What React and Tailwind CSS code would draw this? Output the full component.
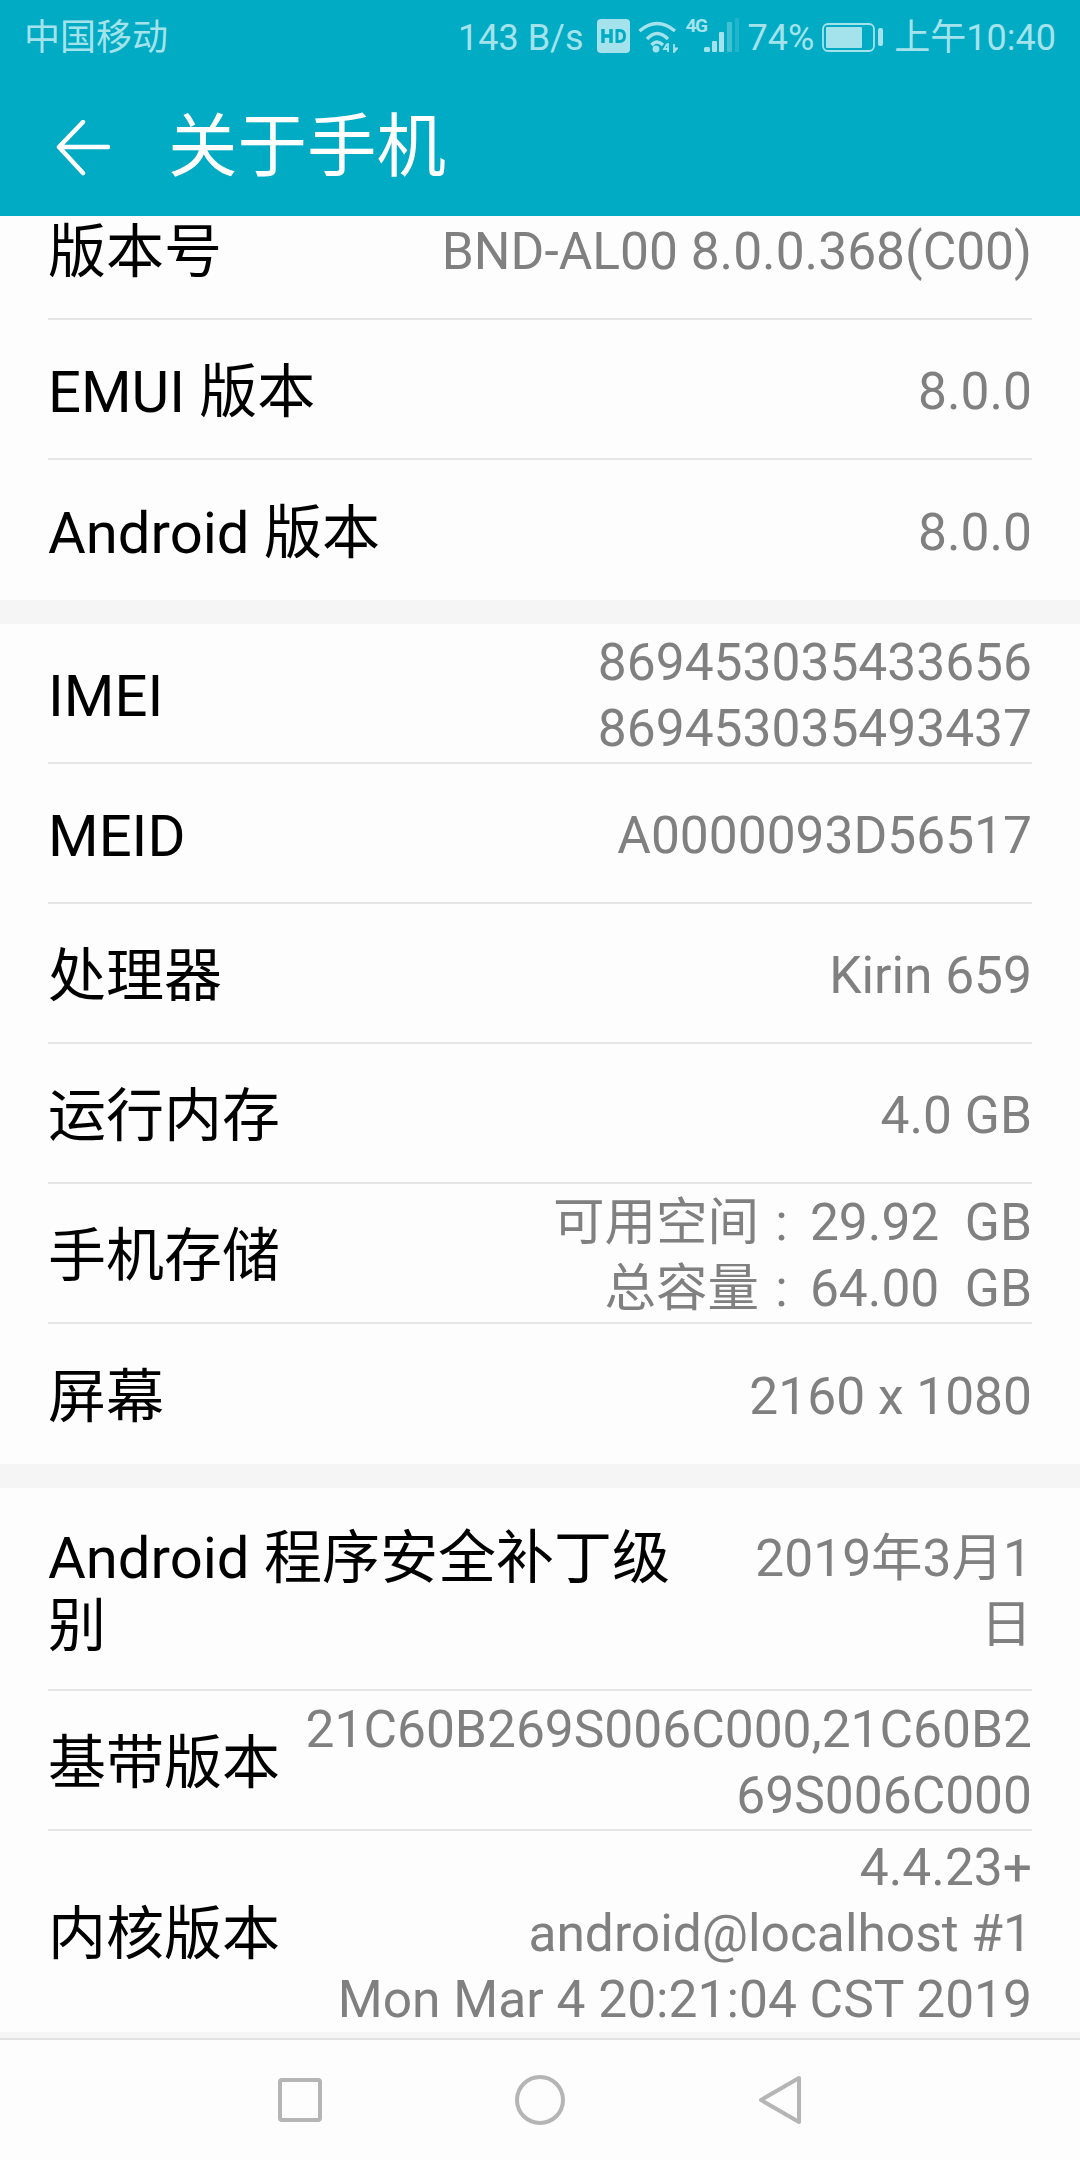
const font = { fontFamily: '"Roboto", "Noto Sans CJK SC", sans-serif' }

function Row({ label, children, className = 'pt-[6px]', last = false }) {
  return (
    <div className={`mx-[48px] flex items-center justify-between min-h-[140px] ${last ? '' : 'border-b-2 border-[#e6e6e6]'} ${className}`}>
      <div className="text-[58px] leading-[68px] text-black shrink-0">{label}</div>
      <div className="text-[51.5px] leading-[66px] text-[#808080] text-right">{children}</div>
    </div>
  )
}

function Gap() {
  return <div className="h-[24px] bg-[#f5f5f5]" />
}

function Colon() {
  return <span className="inline-block w-[51px] pr-[6px] text-center">:</span>
}

function StatusIcons() {
  return (
    <>
      <svg width="33" height="34" viewBox="0 0 33 34" className="ml-[13px] mb-[4px]">
        <rect x="0" y="0" width="33" height="34" rx="4" fill="#a5e3ec" />
        <path d="M6 10v14M6 17h8M14 10v14" stroke="#00abc3" strokeWidth="3.5" fill="none" />
        <path d="M20 11.5v11h2.5q5 0 5-5.5t-5-5.5z" stroke="#00abc3" strokeWidth="3" fill="none" />
      </svg>
      <svg width="40" height="34" viewBox="0 0 40 34" className="ml-[8px] mb-[4px]">
        <path d="M1.5 12Q19 -3 37 12M9 20Q19 9 30 20M13.5 26Q19 20 25 26" stroke="#a5e3ec" strokeWidth="3.4" fill="none" />
        <circle cx="18" cy="30" r="3.4" fill="#a5e3ec" />
        <path d="M29 25l-3 5h5M30 24v9M36 25v8l3-3.5h-3" stroke="#a5e3ec" strokeWidth="1.8" fill="none" />
      </svg>
      <div className="flex flex-col ml-[8px] mb-[6px] w-[18px] h-[36px] text-[19px] leading-[18px] font-bold">
        <span className="whitespace-nowrap inline-block w-[18px] tracking-[-1.5px]">4G</span>
      </div>
      <svg width="37" height="36" viewBox="19 0 37 36" className="mb-[6px]">
        <rect x="19" y="30" width="6" height="5" rx="1.5" fill="#a5e3ec" />
        <rect x="27" y="24" width="5" height="11" rx="1" fill="#a5e3ec" />
        <rect x="34" y="15" width="5" height="20" rx="1" fill="#a5e3ec" />
        <rect x="42" y="5" width="5" height="30" rx="1" fill="#a5e3ec" fillOpacity="0.4" />
        <rect x="50" y="1" width="4" height="34" rx="1" fill="#a5e3ec" fillOpacity="0.2" />
      </svg>
      <span className="ml-[7px]">74%</span>
      <svg width="61" height="30" viewBox="0 0 61 30" className="ml-[8px]">
        <rect x="1" y="1" width="51" height="27" rx="5" fill="none" stroke="#a5e3ec" strokeWidth="1.8" />
        <rect x="4" y="4" width="36" height="21" rx="1" fill="#a5e3ec" />
        <rect x="56" y="5" width="5" height="18" rx="2" fill="#a5e3ec" />
      </svg>
      <span className="ml-[11px]">上午10:40</span>
    </>
  )
}

export default function App() {
  return (
    <div className="w-[1080px] h-[2160px] overflow-hidden flex flex-col bg-[#fdfdfd]" style={font}>
      <div className="h-[216px] bg-[#00abc3] shrink-0">
        <div className="h-[74px] pt-[2px] px-[24px] flex items-center justify-between text-[36px] text-[#a5e3ec]">
          <span>中国移动</span>
          <div className="flex items-center">
            <span>143 B/s</span>
            <StatusIcons />
          </div>
        </div>
        <div className="flex items-center h-[142px] pt-[6px] pl-[56px]">
          <svg width="54" height="56" viewBox="0 0 54 56" fill="none" stroke="#fff" strokeWidth="4.5" strokeLinecap="round" strokeLinejoin="round">
            <path d="M52 27H3M27 2L3 27l24 26" />
          </svg>
          <div className="ml-[58px] text-[69.5px] text-white leading-none">关于手机</div>
        </div>
      </div>

      <div className="flex-1 overflow-hidden">
        <div className="-mt-[36px]">
          <Row label="版本号">BND-AL00 8.0.0.368(C00)</Row>
          <Row label="EMUI 版本">8.0.0</Row>
          <Row label="Android 版本" last>8.0.0</Row>
          <Gap />
          <Row label="IMEI">
            <div>869453035433656</div>
            <div>869453035493437</div>
          </Row>
          <Row label="MEID">A0000093D56517</Row>
          <Row label="处理器">Kirin 659</Row>
          <Row label="运行内存">4.0 GB</Row>
          <Row label="手机存储">
            <div>可用空间<Colon />29.92&nbsp; GB</div>
            <div>总容量<Colon />64.00&nbsp; GB</div>
          </Row>
          <Row label="屏幕" last>2160 x 1080</Row>
          <Gap />
          <Row label={<div className="w-[640px]">Android 程序安全补丁级别</div>} className="pt-[36px] pb-[29px]">
            <div className="w-[300px]">2019年3月1日</div>
          </Row>
          <Row label="基带版本">
            <div className="w-[730px] break-all">21C60B269S006C000,21C60B269S006C000</div>
          </Row>
          <Row label="内核版本" className="pt-[2px] h-[204px]" last>
            <div>4.4.23+</div>
            <div>android@localhost #1</div>
            <div>Mon Mar 4 20:21:04 CST 2019</div>
          </Row>
        </div>
      </div>

      <div className="shrink-0 bg-[#fdfdfd]">
        <div className="h-[6px] bg-[#f5f5f5]" />
        <div className="h-[122px] border-t-2 border-[#e2e2e2] flex items-center justify-center gap-[193px]">
          <svg width="44" height="44" viewBox="0 0 44 44" fill="none" stroke="#b5b5b5" strokeWidth="4" strokeLinejoin="round">
            <rect x="2" y="2" width="40" height="40" rx="2" />
          </svg>
          <svg width="50" height="50" viewBox="0 0 50 50" fill="none" stroke="#b5b5b5" strokeWidth="4">
            <circle cx="25" cy="25" r="23" />
          </svg>
          <svg width="44" height="50" viewBox="0 0 44 50" fill="none" stroke="#b5b5b5" strokeWidth="4" strokeLinejoin="round">
            <path d="M41 3L3 25l38 22z" />
          </svg>
        </div>
      </div>
    </div>
  )
}
